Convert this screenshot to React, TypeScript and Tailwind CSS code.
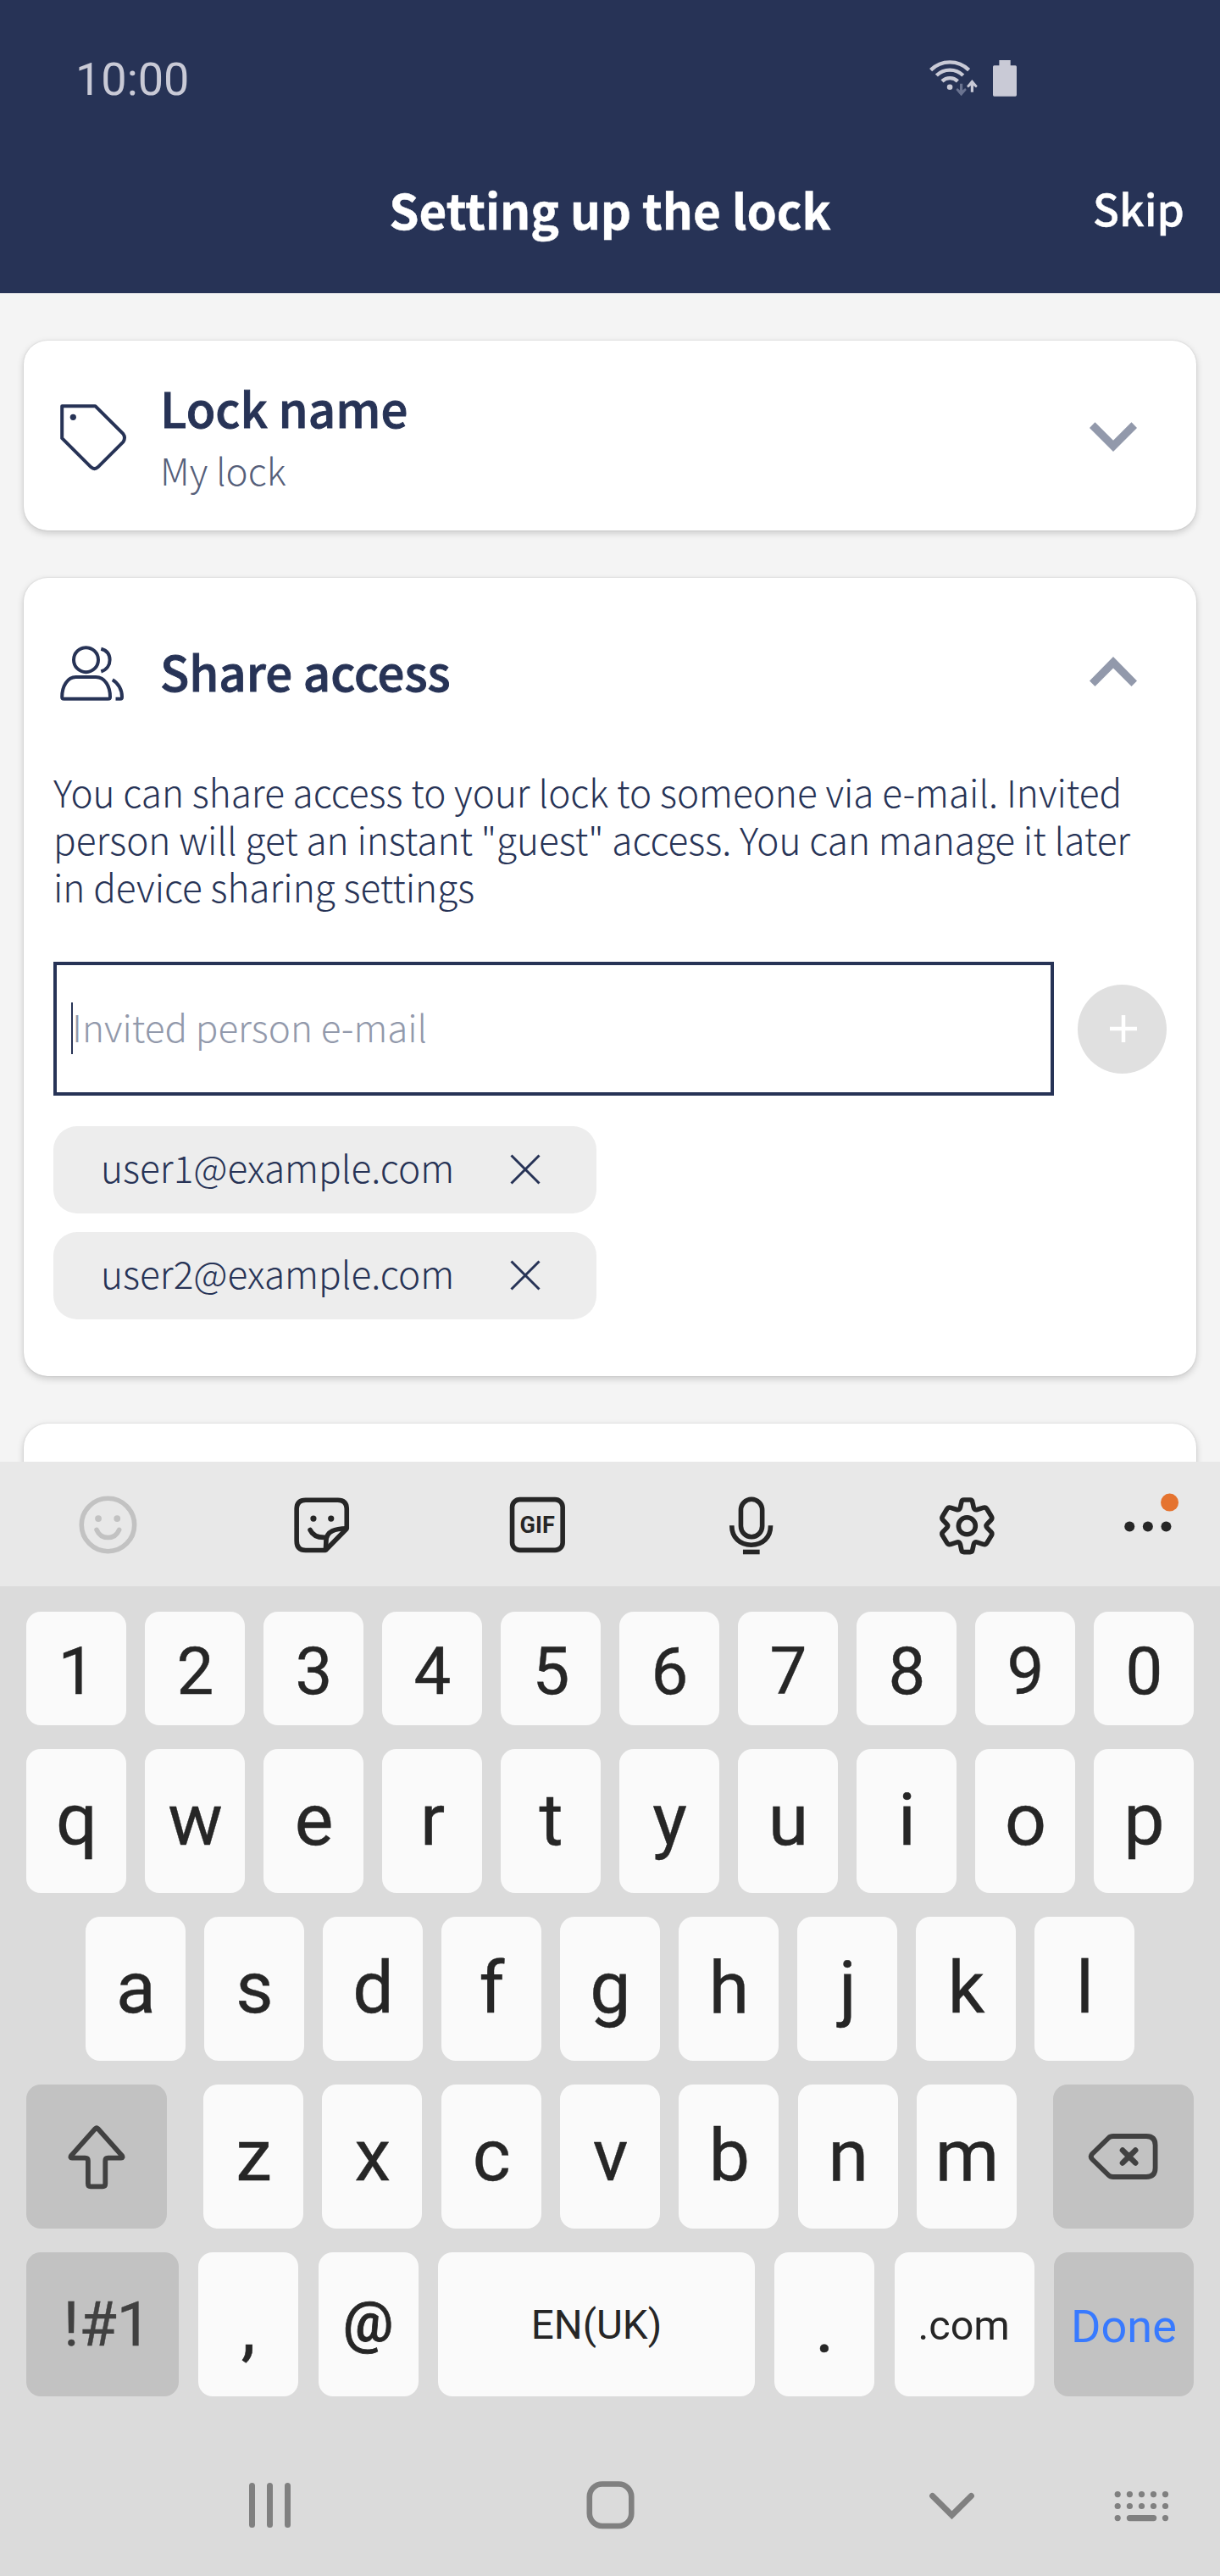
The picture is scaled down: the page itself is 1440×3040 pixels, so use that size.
import React from "react";

const SANS = "font-['Noto_Sans_CJK_SC','Open_Sans',sans-serif]";
const ROBOTO = "font-['Roboto',sans-serif]";

function StatusIcons() {
  return (
    <svg className="mr-[240px] h-[48px] w-[104px]" viewBox="1096 68 104 48" fill="none">
      <g stroke="#c9cad6" strokeWidth="4.4">
        <path d="M1098.6 81.6A32 32 0 0 1 1143.6 81.6" />
        <path d="M1105.4 88A22.5 22.5 0 0 1 1136.8 88" />
        <path d="M1112 94.8A13.3 13.3 0 0 1 1130.4 94.8" />
      </g>
      <circle cx="1121.1" cy="101.8" r="3.3" fill="#c9cad6" />
      <path d="M1133 97.7h3.2v7.8l3-2.6 1.6 2-6.2 7.4-6.2-7.4 1.6-2 3 2.6z" fill="#6a7390" />
      <path d="M1145.8 107.7h3.2v-7.8l3 2.6 1.7-2-6.3-7.5-6.3 7.5 1.7 2 3-2.6z" fill="#c9cad6" />
      <path d="M1179.4 70h13.3v6.3h5.8a1.7 1.7 0 0 1 1.5 1.7v33a1.7 1.7 0 0 1-1.5 1.7h-25a1.7 1.7 0 0 1-1.5-1.7v-33a1.7 1.7 0 0 1 1.5-1.7h5.9z" fill="#c9cad6" />
    </svg>
  );
}

function Chevron({ up = false }: { up?: boolean }) {
  return (
    <svg className="h-[36px] w-[56px]" viewBox="0 0 56 36">
      <path
        d={up ? "M28 0 56 28.5 49.5 35 28 13.5 6.5 35 0 28.5z" : "M28 35 0 7 6.500 0.300 28 21.700 49.500 0.300 56 7z"}
        fill="#9299ab"
      />
    </svg>
  );
}

function TagIcon() {
  return (
    <svg className="h-[80px] w-[80px]" viewBox="70 476 80 80" fill="none" stroke="#273356" strokeWidth="4">
      <path d="M73.2 479.2H112.4L145.3 511.9Q148.7 516.5 145.3 521.6L115.5 551.3Q111.5 554.8 107.5 551.3L73.2 517.2Z" strokeLinejoin="round" />
      <circle cx="86.3" cy="492.3" r="3.6" fill="#273356" stroke="none" />
    </svg>
  );
}

function UsersIcon() {
  return (
    <svg className="h-[68px] w-[80px]" viewBox="70 761 80 68" fill="none" stroke="#273356" strokeWidth="4">
      <circle cx="101.5" cy="778.7" r="14.5" />
      <path d="M119.3 765.7C126 767.5 129.6 772.5 129.6 778.7S126 790.5 119.3 792.5" />
      <path d="M89.5 799H113C124 799 130 810 130 822.5Q130 824.8 127.5 824.8H75.5Q73.2 824.8 73.2 822.5C73.2 810 79.5 799 89.5 799Z" />
      <path d="M132.8 802.2C139.5 806 144 814 144 822.5Q144 824.8 142 824.8H136.5" />
    </svg>
  );
}

function Chip({ email }: { email: string }) {
  return (
    <div className="flex h-[103px] w-[641px] items-center justify-between rounded-[28px] bg-[#ededed] pr-[66px] pb-[1px] pl-[56px]">
      <span className="pb-[6px] text-[44.2px] leading-[60px] font-light whitespace-nowrap">{email}</span>
      <svg className="h-[36px] w-[36px]" viewBox="0 0 36 36" stroke="#273356" strokeWidth="3">
        <path d="M1.5 1.5 34.5 34.5M34.5 1.5 1.5 34.5" />
      </svg>
    </div>
  );
}

function Tool({ x, children }: { x: number; children: React.ReactNode }) {
  return (
    <div className="flex w-[253.5px] items-center justify-center">
      <svg className="h-[76px] w-[76px]" viewBox={`${x - 38} 1760.5 76 76`} fill="none" stroke="#262626" strokeWidth="5.6">
        {children}
      </svg>
    </div>
  );
}

function Toolbar() {
  return (
    <div className="flex h-[147px] bg-[#e8e8e8]">
      <Tool x={126.75}>
        <g stroke="#c2c2c2">
          <circle cx="127.2" cy="1799" r="31.2" />
          <circle cx="115.8" cy="1791.6" r="3.9" fill="#c2c2c2" stroke="none" />
          <circle cx="138" cy="1791.6" r="3.9" fill="#c2c2c2" stroke="none" />
          <path d="M113.8 1804.8C116.5 1811 121 1814 127.1 1814S137.8 1811 140.4 1804.8" strokeLinecap="round" />
        </g>
      </Tool>
      <Tool x={380.25}>
        <path d="M384 1829H361Q350.4 1829 350.4 1818V1780.5Q350.4 1769.7 361 1769.7H399Q409.5 1769.7 409.5 1780.5V1803.5L384.5 1829Z" strokeLinejoin="bevel" />
        <path d="M409.5 1803.3C396 1803.5 385.5 1806 385.2 1818L384.6 1829" />
        <circle cx="370.2" cy="1791.6" r="3.6" fill="#262626" stroke="none" />
        <circle cx="391" cy="1791.6" r="3.6" fill="#262626" stroke="none" />
        <path d="M366.3 1805C369 1811 374 1814.6 385.5 1813.8" strokeLinecap="round" />
      </Tool>
      <Tool x={633.75}>
        <rect x="604.3" y="1769.1" width="59.6" height="59.8" rx="9" />
        <text x="633.9" y="1808.6" textAnchor="middle" fontSize="27" fontWeight="700" fill="#262626" stroke="none" className="font-['Roboto',sans-serif]">
          GIF
        </text>
      </Tool>
      <Tool x={887.25}>
        <rect x="874.7" y="1768.8" width="25.2" height="44.4" rx="12.6" />
        <path d="M864 1799.7C864 1814 873.5 1822.7 887 1822.7S909.8 1814 909.8 1799.7" />
        <path d="M877.2 1831H896.9" />
      </Tool>
      <Tool x={1140.75}>
        <circle cx="1141.1" cy="1800.3" r="10" />
        <path
          d="M1137.5 1769.5H1144.8Q1147.2 1769.5 1147.6 1772L1149 1778.5Q1149.8 1782 1153.2 1781L1160 1778.8Q1163.2 1777.8 1164.8 1780.5L1169.8 1788.7Q1171.5 1791.3 1169.3 1793.5L1165 1798Q1162.8 1800.3 1165 1802.6L1169.3 1807.1Q1171.5 1809.3 1169.8 1811.9L1164.8 1820.1Q1163.2 1822.8 1160 1821.8L1153.2 1819.6Q1149.8 1818.6 1149 1822.1L1147.6 1828.6Q1147.2 1831.1 1144.8 1831.1H1137.5Q1135 1831.1 1134.6 1828.6L1133.2 1822.1Q1132.4 1818.6 1129 1819.6L1122.2 1821.8Q1119 1822.8 1117.4 1820.1L1112.4 1811.9Q1110.7 1809.3 1112.9 1807.1L1117.2 1802.6Q1119.4 1800.3 1117.2 1798L1112.9 1793.5Q1110.7 1791.3 1112.4 1788.7L1117.4 1780.5Q1119 1777.8 1122.2 1778.8L1129 1781Q1132.4 1782 1133.2 1778.5L1134.6 1772Q1135 1769.5 1137.5 1769.5Z"
          strokeLinejoin="round"
        />
      </Tool>
      <div className="flex flex-1 items-center justify-center">
        <svg className="h-[76px] w-[76px]" viewBox="1315.75 1760.5 76 76" fill="#262626">
          <circle cx="1333" cy="1801" r="6" />
          <circle cx="1354.6" cy="1801" r="6" />
          <circle cx="1376.2" cy="1801" r="6" />
          <circle cx="1380.3" cy="1772.6" r="10.5" fill="#e5732f" />
        </svg>
      </div>
    </div>
  );
}

function Key({ children, className }: { children: React.ReactNode; className: string }) {
  return (
    <div className={`flex shrink-0 items-center justify-center rounded-[17px] whitespace-nowrap ${className}`}>{children}</div>
  );
}

const LETTER = "h-[170px] w-[118px] bg-[#fafafa] pb-[2px] pl-[1px] text-[86px] [-webkit-text-stroke:0.4px_#262626]";

function Keyboard() {
  return (
    <div className={`flex h-[1168px] flex-col gap-[28px] bg-[#dbdbdb] px-[31px] pt-[30px] leading-none text-[#262626] ${ROBOTO}`}>
      <div className="flex justify-between">
        {"1234567890".split("").map((k) => (
          <Key key={k} className="h-[134px] w-[118px] bg-[#fafafa] pt-[8px] pl-[1px] text-[78px] [-webkit-text-stroke:0.4px_#262626]">{k}</Key>
        ))}
      </div>
      <div className="flex justify-between">
        {"qwertyuiop".split("").map((k) => (
          <Key key={k} className={LETTER}>{k}</Key>
        ))}
      </div>
      <div className="flex justify-between px-[70px]">
        {"asdfghjkl".split("").map((k) => (
          <Key key={k} className={LETTER}>{k}</Key>
        ))}
      </div>
      <div className="flex justify-between">
        <Key className="h-[170px] w-[166px] bg-[#c2c2c2]">
          <svg className="h-[80px] w-[80px]" viewBox="74 2505 80 80" fill="none" stroke="#414141" strokeWidth="5.8" strokeLinejoin="round">
            <path d="M112.5 2512Q114 2510.5 115.5 2512L144 2544Q145.5 2546.7 143 2546.7H127.5Q124.3 2546.7 124.3 2550V2577Q124.3 2580.3 121 2580.3H107Q103.9 2580.3 103.9 2577V2550Q103.9 2546.7 100.5 2546.7H85Q82.5 2546.7 84 2544Z" />
          </svg>
        </Key>
        <div className="flex w-[960px] justify-between">
          {"zxcvbnm".split("").map((k) => (
            <Key key={k} className={LETTER}>{k}</Key>
          ))}
        </div>
        <Key className="h-[170px] w-[166px] bg-[#c2c2c2]">
          <svg className="h-[60px] w-[90px]" viewBox="1281 2515 90 60" fill="none" stroke="#414141" strokeWidth="5.8" strokeLinecap="round">
            <path d="M1314 2521H1353Q1363.6 2521 1363.6 2531.5V2558.5Q1363.6 2569 1353 2569H1314Q1310.5 2569 1308.5 2567L1289.5 2548.5Q1286 2545 1289.5 2541.5L1308.5 2523Q1310.5 2521 1314 2521Z" />
            <path d="M1325 2537.5 1340.2 2552.5M1340.2 2537.5 1325 2552.5" strokeWidth="6.6" />
          </svg>
        </Key>
      </div>
      <div className="flex justify-between">
        <Key className="h-[170px] w-[180px] bg-[#c2c2c2] pt-[2px] pl-[11px] text-[72px] text-[#414141] [-webkit-text-stroke:0.4px_#414141]">!#1</Key>
        <Key className="h-[170px] w-[118px] bg-[#fafafa] pt-[8px] text-[86px] [-webkit-text-stroke:0.6px_#262626]">,</Key>
        <Key className="h-[170px] w-[118px] bg-[#fafafa] pb-[4px] text-[66px] font-medium [-webkit-text-stroke:0.8px_#262626]">@</Key>
        <Key className="h-[170px] w-[374px] bg-[#fafafa] pt-[4px] text-[47.6px]">EN(UK)</Key>
        <Key className="h-[170px] w-[118px] bg-[#fafafa] pt-[8px] text-[86px] [-webkit-text-stroke:0.6px_#262626]">.</Key>
        <Key className="h-[170px] w-[165px] bg-[#fafafa] pt-[4px] pr-[1px] text-[48.5px]">.com</Key>
        <Key className="h-[170px] w-[165px] bg-[#c2c2c2] pt-[6px] text-[54px] text-[#387aff]">Done</Key>
      </div>
      <NavBar />
    </div>
  );
}

function NavBar() {
  const dots = [1319.2, 1333.4, 1347.5, 1361.5, 1375.5];
  return (
    <div className="mt-[64px] flex h-[72px] items-center pl-[258px]">
      <svg className="h-[72px] w-[60px]" viewBox="289 2920 60 72" stroke="#808080" strokeWidth="7" strokeLinecap="round">
        <path d="M297.5 2933.5V2979.5M318.5 2933.5V2979.5M339.5 2933.5V2979.5" />
      </svg>
      <svg className="ml-[341px] h-[72px] w-[60px]" viewBox="690 2920 60 72" fill="none" stroke="#808080" strokeWidth="6.6">
        <rect x="695.8" y="2931.5" width="49.5" height="49.5" rx="15" />
      </svg>
      <svg className="ml-[343px] h-[72px] w-[60px]" viewBox="1093 2920 60 72" fill="none" stroke="#808080" strokeWidth="7" strokeLinecap="round">
        <path d="M1100.6 2945.5 1123.5 2968.2 1146.4 2945.5" />
      </svg>
      <svg className="ml-[162px] h-[72px] w-[68px]" viewBox="1315 2920 68 72" fill="#808080">
        {dots.map((x) => (
          <g key={x}>
            <circle cx={x} cy="2943.6" r="3.6" />
            <circle cx={x} cy="2957.5" r="3.6" />
          </g>
        ))}
        <circle cx={dots[0]} cy="2971.6" r="3.6" />
        <circle cx={dots[4]} cy="2971.6" r="3.6" />
        <rect x="1329.8" y="2968" width="35.4" height="7.2" rx="3.6" />
      </svg>
    </div>
  );
}

const CARD = "rounded-[28px] bg-white shadow-[0_3px_8px_rgba(0,0,0,0.18),0_0_2px_rgba(0,0,0,0.14)]";
const HEADING = "text-[56.4px] leading-[80px] font-medium whitespace-nowrap [-webkit-text-stroke:0.9px_#273356]";

export default function App() {
  return (
    <div className={`h-[3040px] w-[1440px] overflow-hidden bg-[#f4f4f4] text-[#273356] ${SANS}`}>
      <header className="h-[346px] bg-[#273356] text-white">
        <div className="flex h-[186px] items-center justify-between pl-[89px]">
          <span className={`pt-[2px] text-[54px] leading-none text-[#c9cad6] ${ROBOTO}`}>10:00</span>
          <StatusIcons />
        </div>
        <div className="grid h-[120px] grid-cols-[1fr_auto_1fr] items-center">
          <span />
          <h1 className="text-[56.5px] leading-[80px] font-bold whitespace-nowrap [-webkit-text-stroke:0.5px_#fff]">Setting up the lock</h1>
          <span className="pr-[42px] pb-[2px] text-right text-[51.5px] leading-[80px] font-medium [-webkit-text-stroke:0.4px_#fff]">Skip</span>
        </div>
      </header>

      <main className="h-[1379px] overflow-hidden px-[28px] pt-[56px]">
        <section className={`flex h-[224px] items-start justify-between ${CARD}`}>
          <div className="flex pl-[42px]">
            <div className="pt-[74px]">
              <TagIcon />
            </div>
            <div className="pt-[39px] pl-[39px]">
              <h2 className={HEADING}>Lock name</h2>
              <p className="mt-[3px] text-[44px] leading-[60px] font-light whitespace-nowrap text-[#273356]/80">My lock</p>
            </div>
          </div>
          <div className="pt-[96px] pr-[70px]">
            <Chevron />
          </div>
        </section>

        <section className={`mt-[56px] h-[942px] ${CARD}`}>
          <div className="flex h-[220px] items-center justify-between pr-[70px] pl-[42px]">
            <div className="flex items-center">
              <div className="pt-[5px]">
                <UsersIcon />
              </div>
              <h2 className={`pl-[39px] ${HEADING}`}>Share access</h2>
            </div>
            <div className="pt-[2px]">
              <Chevron up />
            </div>
          </div>
          <div className="pt-[4px] pl-[35px]">
            <p className="text-[44.1px] leading-[56px] font-light whitespace-nowrap">
              You can share access to your lock to someone via e-mail. Invited
              <br />
              person will get an instant "guest" access. You can manage it later
              <br />
              in device sharing settings
            </p>
            <div className="mt-[61px] flex items-center gap-[28px]">
              <div className="flex h-[158px] w-[1181px] items-center border-4 border-[#273356] pb-[2px] pl-[17px]">
                <span className="h-[61px] w-[2px] bg-[#273356]" />
                <span className="-ml-[1px] pb-[4px] text-[44px] leading-[60px] font-light whitespace-nowrap text-[#9299ab]">Invited person e-mail</span>
              </div>
              <div className="flex h-[105px] w-[105px] items-center justify-center rounded-full bg-[#e0e0e0]">
                <svg className="h-[34px] w-[34px]" viewBox="0 0 34 34" stroke="#fff" strokeWidth="4.5">
                  <path d="M18 1V33M2 17H34" />
                </svg>
              </div>
            </div>
            <div className="mt-[36px] flex flex-col gap-[22px]">
              <Chip email="user1@example.com" />
              <Chip email="user2@example.com" />
            </div>
          </div>
        </section>

        <section className={`mt-[56px] h-[224px] ${CARD}`} />
      </main>

      <Toolbar />
      <Keyboard />
    </div>
  );
}
